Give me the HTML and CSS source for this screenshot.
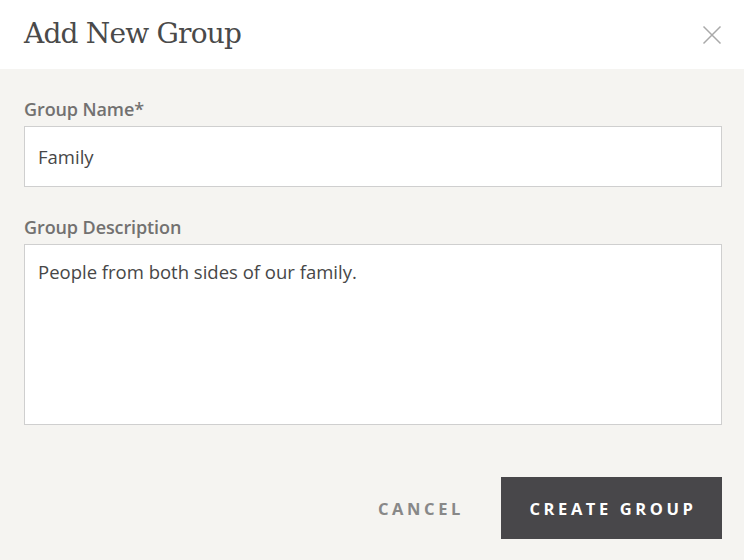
FILE: index.html
```html
<!DOCTYPE html>
<html>
<head>
<meta charset="utf-8">
<link rel="stylesheet" href="styles.css">
</head>
<body>
<div class="dialog">
  <header class="dialog-header">
    <h1 class="dialog-title">Add New Group</h1>
    <button class="close-btn" aria-label="Close">
      <svg width="20" height="20" viewBox="0 0 20 20"><path d="M1.5 1.5 L18.5 18.5 M18.5 1.5 L1.5 18.5" stroke="#a9a9a9" stroke-width="1.5" fill="none"/></svg>
    </button>
  </header>
  <div class="dialog-body">
    <label class="field-label">Group Name*</label>
    <div class="input">Family</div>
    <label class="field-label second">Group Description</label>
    <div class="textarea">People from both sides of our family.</div>
    <div class="actions">
      <button class="btn-cancel">CANCEL</button>
      <button class="btn-create">CREATE GROUP</button>
    </div>
  </div>
</div>
</body>
</html>
```
FILE: styles.css
```css
html, body { margin: 0; padding: 0; }
body { background: #f5f4f1; font-family: "Open Sans", "Liberation Sans", sans-serif; }
.dialog { width: 744px; height: 560px; display: flex; flex-direction: column; }
.dialog-header {
  height: 69px; background: #fff; display: flex; align-items: center;
  justify-content: space-between; padding: 0 22px 0 24px; box-sizing: border-box;
}
.dialog-title {
  margin: 0 0 2px 0; font-family: "DejaVu Serif", serif; font-weight: normal;
  font-size: 28px; color: #4a4a4a; letter-spacing: -0.8px;
}
.close-btn { border: 0; background: none; padding: 0; width: 20px; height: 20px; display: flex; }
.dialog-body { flex: 1; padding: 29px 22px 0 24px; box-sizing: border-box; display: flex; flex-direction: column; }
.field-label { font-size: 18px; font-weight: 600; color: #727170; line-height: 22px; margin-bottom: 6px; letter-spacing: -0.1px; }
.field-label.second { margin-top: 29px; }
.input, .textarea {
  background: #fff; border: 1px solid #cfcfcf; box-sizing: border-box;
  font-size: 18.5px; color: #474747; padding: 0 13px;
}
.input { height: 61px; line-height: 59px; }
.textarea { height: 181px; padding-top: 15px; line-height: 24px; }
.actions { display: flex; justify-content: flex-end; align-items: center; margin-top: 52px; gap: 37px; }
.btn-cancel {
  border: 0; background: none; font-family: inherit; font-weight: 700; font-size: 16.5px;
  letter-spacing: 3.6px; color: #888888; padding: 0;
}
.btn-create {
  border: 0; background: #48474a; color: #fff; font-family: inherit; font-weight: 700;
  font-size: 16.5px; letter-spacing: 3.6px; width: 221px; height: 62px; padding: 0 0 0 3px;
}
```
